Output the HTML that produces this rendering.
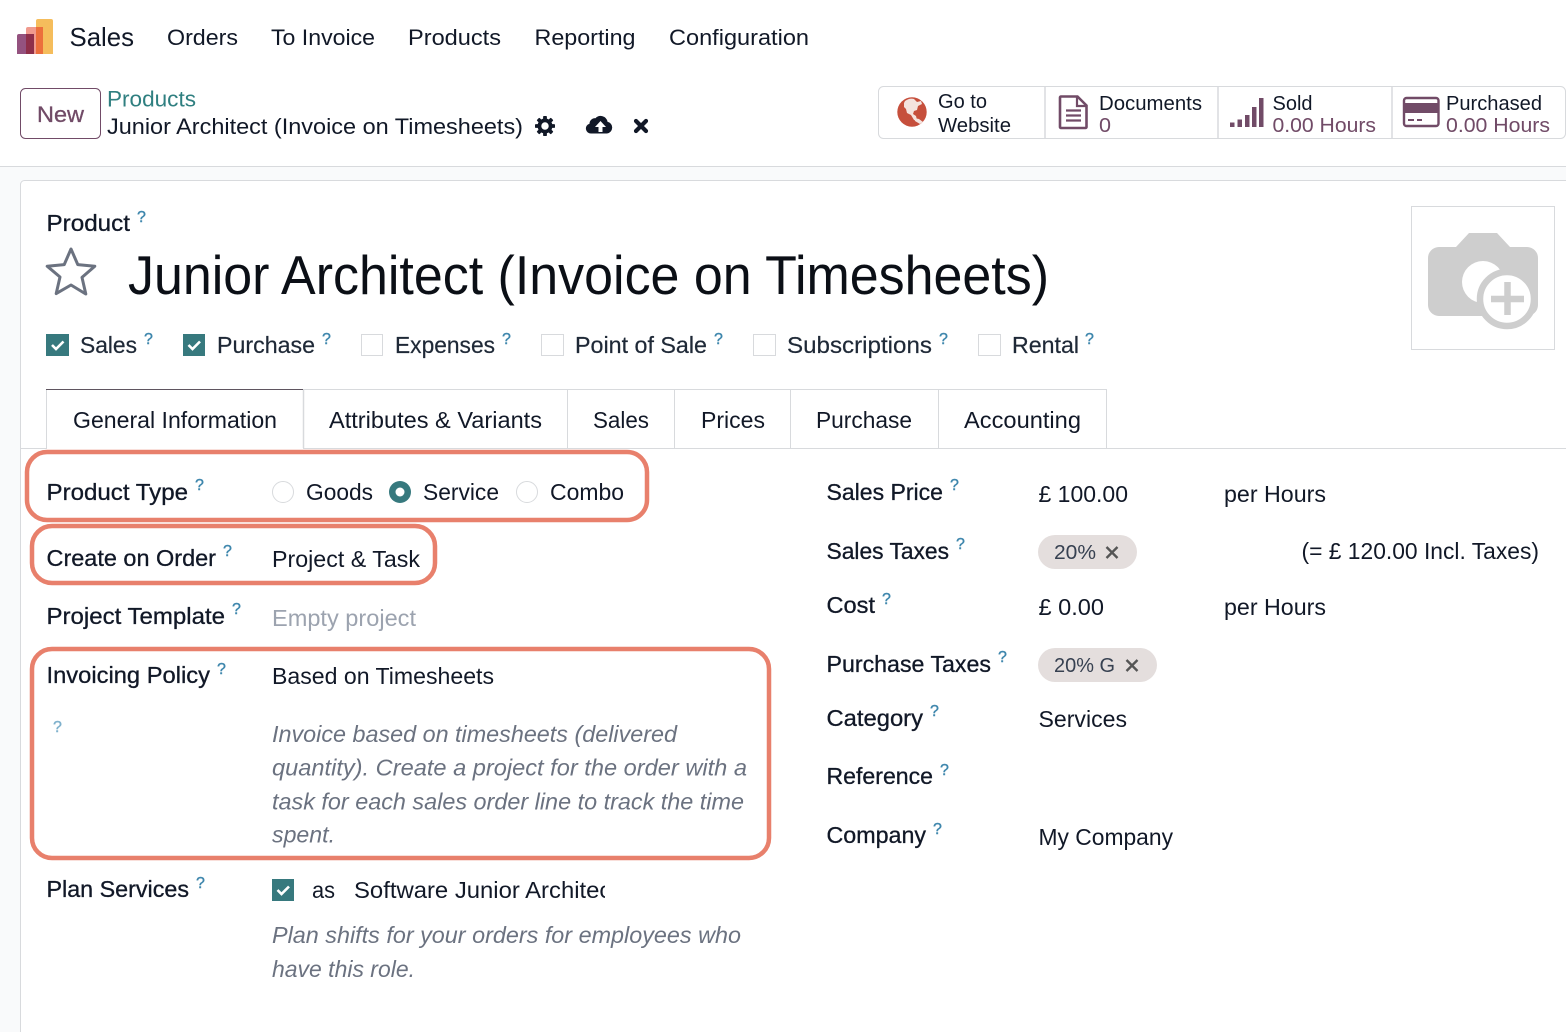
<!DOCTYPE html>
<html lang="en">
<head>
<meta charset="utf-8">
<title>Junior Architect (Invoice on Timesheets)</title>
<style>
html,body{margin:0;padding:0;width:1566px;height:1032px;overflow:hidden;background:#fff}
svg{display:block}
text{font-family:"Liberation Sans",sans-serif;fill:#1f2937;font-size:23px}
.n{font-size:22.5px;fill:#111827}
.l{fill:#111827;stroke:#111827;stroke-width:.3px;font-size:23px}
.v{font-size:23px;fill:#111827}
.i{font-style:italic;fill:#6b7280;font-size:23px}
.b{font-size:20px;fill:#111827}
.p{font-size:20px;fill:#714b67}
.q{font-size:16px;fill:#3f87ad;stroke:#3f87ad;stroke-width:.4px}
.c{fill:#1f2937;stroke:#1f2937;stroke-width:.2px}
.t{font-size:23px;fill:#111827}
</style>
</head>
<body>
<svg xmlns="http://www.w3.org/2000/svg" width="1566" height="1032" viewBox="0 0 1566 1032">
<defs><clipPath id="clipS"><rect x="350" y="870" width="255" height="40"/></clipPath></defs>
<rect width="1566" height="1032" fill="#fff"/>
<rect y="166" width="1566" height="866" fill="#f9fafb"/>
<rect y="166" width="1566" height="1" fill="#d8dadd"/>
<rect x="20.5" y="180.5" width="1560" height="870" rx="4" fill="#fff" stroke="#d8dadd"/>

<!-- logo -->
<path d="M38 19h13a2 2 0 0 1 2 2v33H36V21a2 2 0 0 1 2-2z" fill="#f5bd5c"/>
<path d="M28 27h15v27H26V29a2 2 0 0 1 2-2z" fill="#f09a8e"/>
<path d="M36 27h7v27h-7z" fill="#ec6f3c"/>
<path d="M19 34h15v20H17V36a2 2 0 0 1 2-2z" fill="#94527f"/>
<path d="M26 34h8v20h-8z" fill="#8f2f4a"/>

<!-- nav -->
<text x="69.5" y="46" style="font-size:26px;fill:#111827" textLength="64.5" lengthAdjust="spacingAndGlyphs">Sales</text>
<text class="n" x="167" y="45" textLength="71" lengthAdjust="spacingAndGlyphs">Orders</text>
<text class="n" x="271" y="45" textLength="104" lengthAdjust="spacingAndGlyphs">To Invoice</text>
<text class="n" x="408" y="45" textLength="93" lengthAdjust="spacingAndGlyphs">Products</text>
<text class="n" x="534.5" y="45" textLength="101" lengthAdjust="spacingAndGlyphs">Reporting</text>
<text class="n" x="669" y="45" textLength="140" lengthAdjust="spacingAndGlyphs">Configuration</text>

<!-- control panel -->
<rect x="20.5" y="88.5" width="80" height="50" rx="5" fill="#fff" stroke="#714b67"/>
<text x="37" y="122" style="font-size:22.5px;fill:#714b67;stroke:#714b67;stroke-width:.3px" textLength="47" lengthAdjust="spacingAndGlyphs">New</text>
<text x="107" y="106.5" style="font-size:22px;fill:#2f7f80" textLength="89" lengthAdjust="spacingAndGlyphs">Products</text>
<text class="n" x="107" y="134" textLength="416" lengthAdjust="spacingAndGlyphs">Junior Architect (Invoice on Timesheets)</text>
<!-- gear -->
<g transform="translate(545 126)" fill="#111827">
<circle r="5.6" fill="none" stroke="#111827" stroke-width="3.8"/>
<rect x="-1.9" y="-10" width="3.8" height="20" rx=".8"/><rect x="-1.9" y="-10" width="3.8" height="20" rx=".8" transform="rotate(45)"/><rect x="-1.9" y="-10" width="3.8" height="20" rx=".8" transform="rotate(90)"/><rect x="-1.9" y="-10" width="3.8" height="20" rx=".8" transform="rotate(135)"/>
<circle r="3.7" fill="#fff"/>
</g>
<!-- cloud -->
<path d="M592 134a5 5 0 0 1-1.500-9.800 5.500 5.500 0 0 1 6-5.500 7 7 0 0 1 12 3.500 6 6 0 0 1-.5 11.800z" fill="#111827" transform="translate(-1 -.5)"/>
<path d="M600.500 121l-5.500 6h3.500v5h4v-5h3.500z" fill="#fff"/>
<!-- x -->
<path d="M636 121l10 10M646 121l-10 10" stroke="#111827" stroke-width="4.2" stroke-linecap="round"/>

<!-- stat buttons -->
<rect x="878.500" y="86.500" width="687" height="52" rx="5" fill="#fff" stroke="#d8dadd"/>
<path d="M1045 87v51M1218 87v51M1392 87v51" stroke="#d8dadd" stroke-width="1.500"/>
<circle cx="912" cy="112" r="14.700" fill="#c64f3c"/>
<path d="M905 101c3-2 6-3 9-2l3 3 4-1 1 3-4 2-1 4-3 1-1 3 3 2 1 4-3 0-3-5-4-2-1-4-2-2 0-4z" fill="#f4e3df"/>
<path d="M914 118l5 1 4 3-3 2-5-3z" fill="#f4e3df"/>
<text class="b" x="938" y="108" textLength="49" lengthAdjust="spacingAndGlyphs">Go to</text>
<text class="b" x="938" y="132" textLength="73" lengthAdjust="spacingAndGlyphs">Website</text>
<path d="M1061 96.500h16.500l9 9v21.500a1 1 0 0 1-1 1h-24.500a1 1 0 0 1-1-1V97.500a1 1 0 0 1 1-1z" fill="none" stroke="#714b67" stroke-width="2.600"/>
<path d="M1077 96.500v9.500h9.500" fill="none" stroke="#714b67" stroke-width="2.200"/>
<path d="M1066 110.500h15M1066 115.500h15M1066 120.500h15" stroke="#714b67" stroke-width="2.300"/>
<text class="b" x="1099" y="110" textLength="103" lengthAdjust="spacingAndGlyphs">Documents</text>
<text class="p" x="1099" y="132" textLength="12" lengthAdjust="spacingAndGlyphs">0</text>
<path d="M1230 122.500h4.500v4.500H1230zM1237.500 119.500h4.500V127h-4.500zM1245 115h4.500v12H1245zM1252 107h4.500v20H1252zM1259 98h4.500v29H1259z" fill="#714b67"/>
<text class="b" x="1272.500" y="110" textLength="40" lengthAdjust="spacingAndGlyphs">Sold</text>
<text class="p" x="1272.500" y="132" textLength="103.500" lengthAdjust="spacingAndGlyphs">0.00 Hours</text>
<rect x="1404" y="98" width="34.500" height="28" rx="2.500" fill="#fff" stroke="#714b67" stroke-width="2.400"/>
<rect x="1404" y="103" width="34.500" height="10" fill="#714b67"/>
<path d="M1408 120h6M1417 120h5" stroke="#714b67" stroke-width="2"/>
<text class="b" x="1446" y="110" textLength="96" lengthAdjust="spacingAndGlyphs">Purchased</text>
<text class="p" x="1446" y="132" textLength="104" lengthAdjust="spacingAndGlyphs">0.00 Hours</text>

<!-- image box -->
<rect x="1411.500" y="206.500" width="143" height="143" fill="#fff" stroke="#d8dadd"/>
<path d="M1469 233h28l13 14h17a11 11 0 0 1 11 11v47a11 11 0 0 1-11 11h-88a11 11 0 0 1-11-11v-47a11 11 0 0 1 11-11h17z" fill="#cecece"/>
<circle cx="1483" cy="282" r="21" fill="#fff"/>
<circle cx="1507" cy="299" r="27" fill="#fff" stroke="#cecece" stroke-width="6.500"/>
<path d="M1491 299h33M1507.500 282v33" stroke="#cecece" stroke-width="6.500"/>

<!-- title -->
<text class="l" x="46.500" y="231" textLength="83.500" lengthAdjust="spacingAndGlyphs">Product</text>
<text class="q" x="137" y="222">?</text>
<path d="M71 249l6.800 15.600 17 1.600-12.800 11.200 3.800 16.600L71 285l-14.800 8.600 3.800-16.600L47.200 266.200l17-1.600z" fill="none" stroke="#6b7280" stroke-width="3" stroke-linejoin="round"/>
<text x="128" y="294" style="font-size:55px;fill:#0b0f16" textLength="921" lengthAdjust="spacingAndGlyphs">Junior Architect (Invoice on Timesheets)</text>

<!-- checkboxes -->
<g fill="#37797e">
<rect x="46" y="334" width="23" height="22"/>
<rect x="183" y="334" width="22" height="22"/>
<rect x="272" y="879" width="22" height="22"/>
</g>
<g fill="none" stroke="#fff" stroke-width="2.600">
<path d="M52 345l4 4 7.500-7.500"/>
<path d="M188.500 345l4 4 7.500-7.500"/>
<path d="M277.500 890l4 4 7.500-7.500"/>
</g>
<g fill="#fff" stroke="#d8dadd">
<rect x="361.500" y="334.500" width="21" height="21"/>
<rect x="541.500" y="334.500" width="22" height="21"/>
<rect x="753.500" y="334.500" width="22" height="21"/>
<rect x="978.500" y="334.500" width="22" height="21"/>
</g>
<text class="c" x="80" y="353" textLength="57" lengthAdjust="spacingAndGlyphs">Sales</text><text class="q" x="144" y="344">?</text>
<text class="c" x="217" y="353" textLength="98" lengthAdjust="spacingAndGlyphs">Purchase</text><text class="q" x="322" y="344">?</text>
<text class="c" x="395" y="353" textLength="100" lengthAdjust="spacingAndGlyphs">Expenses</text><text class="q" x="502" y="344">?</text>
<text class="c" x="575" y="353" textLength="132" lengthAdjust="spacingAndGlyphs">Point of Sale</text><text class="q" x="714" y="344">?</text>
<text class="c" x="787" y="353" textLength="145" lengthAdjust="spacingAndGlyphs">Subscriptions</text><text class="q" x="939" y="344">?</text>
<text class="c" x="1012" y="353" textLength="67" lengthAdjust="spacingAndGlyphs">Rental</text><text class="q" x="1085" y="344">?</text>

<!-- tabs -->
<path d="M21 448.500H1566" stroke="#d8dadd"/>
<path d="M303 389.500H1107M567.500 390v58M674.500 390v58M790.500 390v58M938.500 390v58M1106.500 390v58" stroke="#d8dadd" fill="none"/>
<path d="M303.500 390v58" stroke="#d8dadd" stroke-width="1.500"/>
<path d="M46.500 449V389.500H303" stroke="#d8dadd" fill="none"/>
<path d="M46 389.500H303" stroke="#5f5560"/>
<rect x="47" y="448" width="256" height="1.500" fill="#fff"/>
<text class="t" x="73" y="428" textLength="204" lengthAdjust="spacingAndGlyphs">General Information</text>
<text class="t" x="329" y="428" textLength="213" lengthAdjust="spacingAndGlyphs">Attributes &amp; Variants</text>
<text class="t" x="593" y="428" textLength="56" lengthAdjust="spacingAndGlyphs">Sales</text>
<text class="t" x="701" y="428" textLength="64" lengthAdjust="spacingAndGlyphs">Prices</text>
<text class="t" x="816" y="428" textLength="96" lengthAdjust="spacingAndGlyphs">Purchase</text>
<text class="t" x="964" y="428" textLength="117" lengthAdjust="spacingAndGlyphs">Accounting</text>

<!-- highlights -->
<g fill="none" stroke="#e8806c" stroke-width="4.500">
<rect x="27" y="452" width="620" height="68" rx="20"/>
<rect x="32" y="526" width="403" height="57" rx="20"/>
<rect x="32" y="649" width="737" height="209" rx="20"/>
</g>

<!-- left form -->
<text class="l" x="46.500" y="500" textLength="141.500" lengthAdjust="spacingAndGlyphs">Product Type</text><text class="q" x="195" y="490">?</text>
<circle cx="283" cy="492" r="10.500" fill="#fff" stroke="#d8dadd"/>
<text class="v" x="306" y="500" textLength="67" lengthAdjust="spacingAndGlyphs">Goods</text>
<circle cx="400" cy="492" r="11" fill="#37797e"/><circle cx="400" cy="492" r="4.500" fill="#fff"/>
<text class="v" x="423" y="500" textLength="76" lengthAdjust="spacingAndGlyphs">Service</text>
<circle cx="527" cy="492" r="10.500" fill="#fff" stroke="#d8dadd"/>
<text class="v" x="550" y="500" textLength="74" lengthAdjust="spacingAndGlyphs">Combo</text>

<text class="l" x="46.500" y="566" textLength="169.500" lengthAdjust="spacingAndGlyphs">Create on Order</text><text class="q" x="223" y="556">?</text>
<text class="v" x="272" y="567" textLength="148" lengthAdjust="spacingAndGlyphs">Project &amp; Task</text>

<text class="l" x="46.500" y="624" textLength="178.500" lengthAdjust="spacingAndGlyphs">Project Template</text><text class="q" x="232" y="614">?</text>
<text class="v" x="272" y="626" style="fill:#9ca3af" textLength="144" lengthAdjust="spacingAndGlyphs">Empty project</text>

<text class="l" x="46.500" y="683" textLength="163.500" lengthAdjust="spacingAndGlyphs">Invoicing Policy</text><text class="q" x="217" y="674">?</text>
<text class="v" x="272" y="684" textLength="222" lengthAdjust="spacingAndGlyphs">Based on Timesheets</text>
<text class="q" x="53" y="732" style="fill:#7fb1cc;stroke:#7fb1cc">?</text>
<text class="i" x="272" y="742" textLength="405" lengthAdjust="spacingAndGlyphs">Invoice based on timesheets (delivered</text>
<text class="i" x="272" y="775.500" textLength="475" lengthAdjust="spacingAndGlyphs">quantity). Create a project for the order with a</text>
<text class="i" x="272" y="809.500" textLength="472" lengthAdjust="spacingAndGlyphs">task for each sales order line to track the time</text>
<text class="i" x="272" y="842.500" textLength="63" lengthAdjust="spacingAndGlyphs">spent.</text>

<text class="l" x="46.500" y="897" textLength="142.500" lengthAdjust="spacingAndGlyphs">Plan Services</text><text class="q" x="196" y="888">?</text>
<text class="v" x="312" y="898" textLength="23" lengthAdjust="spacingAndGlyphs">as</text>
<g clip-path="url(#clipS)"><text class="v" x="354" y="898" textLength="264" lengthAdjust="spacingAndGlyphs">Software Junior Architect</text></g>
<text class="i" x="272" y="943" textLength="469" lengthAdjust="spacingAndGlyphs">Plan shifts for your orders for employees who</text>
<text class="i" x="272" y="977" textLength="143" lengthAdjust="spacingAndGlyphs">have this role.</text>

<!-- right form -->
<text class="l" x="826.500" y="500" textLength="116.500" lengthAdjust="spacingAndGlyphs">Sales Price</text><text class="q" x="950" y="490">?</text>
<text class="v" x="1038.500" y="502" textLength="89.500" lengthAdjust="spacingAndGlyphs">£ 100.00</text>
<text class="v" x="1224" y="502" textLength="102" lengthAdjust="spacingAndGlyphs">per Hours</text>

<text class="l" x="826.500" y="559" textLength="122.500" lengthAdjust="spacingAndGlyphs">Sales Taxes</text><text class="q" x="956" y="549">?</text>
<rect x="1038" y="535" width="99" height="34" rx="17" fill="#e4dedd"/>
<text x="1054" y="559" style="font-size:20px;fill:#374151" textLength="42" lengthAdjust="spacingAndGlyphs">20%</text>
<path d="M1106.500 547l11 11M1117.500 547l-11 11" stroke="#555" stroke-width="2.400"/>
<text class="v" x="1301.500" y="559" textLength="237.500" lengthAdjust="spacingAndGlyphs">(= £ 120.00 Incl. Taxes)</text>

<text class="l" x="826.500" y="613" textLength="48.500" lengthAdjust="spacingAndGlyphs">Cost</text><text class="q" x="882" y="604">?</text>
<text class="v" x="1038.500" y="615" textLength="65.500" lengthAdjust="spacingAndGlyphs">£ 0.00</text>
<text class="v" x="1224" y="615" textLength="102" lengthAdjust="spacingAndGlyphs">per Hours</text>

<text class="l" x="826.500" y="672" textLength="164.500" lengthAdjust="spacingAndGlyphs">Purchase Taxes</text><text class="q" x="998" y="662">?</text>
<rect x="1038" y="648" width="119" height="34" rx="17" fill="#e4dedd"/>
<text x="1054" y="672" style="font-size:20px;fill:#374151" textLength="61" lengthAdjust="spacingAndGlyphs">20% G</text>
<path d="M1126.500 660l11 11M1137.500 660l-11 11" stroke="#555" stroke-width="2.400"/>

<text class="l" x="826.500" y="726" textLength="96.500" lengthAdjust="spacingAndGlyphs">Category</text><text class="q" x="930" y="716">?</text>
<text class="v" x="1038.500" y="727" textLength="88.500" lengthAdjust="spacingAndGlyphs">Services</text>

<text class="l" x="826.500" y="784" textLength="106.500" lengthAdjust="spacingAndGlyphs">Reference</text><text class="q" x="940" y="775">?</text>

<text class="l" x="826.500" y="843" textLength="99.500" lengthAdjust="spacingAndGlyphs">Company</text><text class="q" x="933" y="834">?</text>
<text class="v" x="1038.500" y="845" textLength="134.500" lengthAdjust="spacingAndGlyphs">My Company</text>
</svg>
</body>
</html>
